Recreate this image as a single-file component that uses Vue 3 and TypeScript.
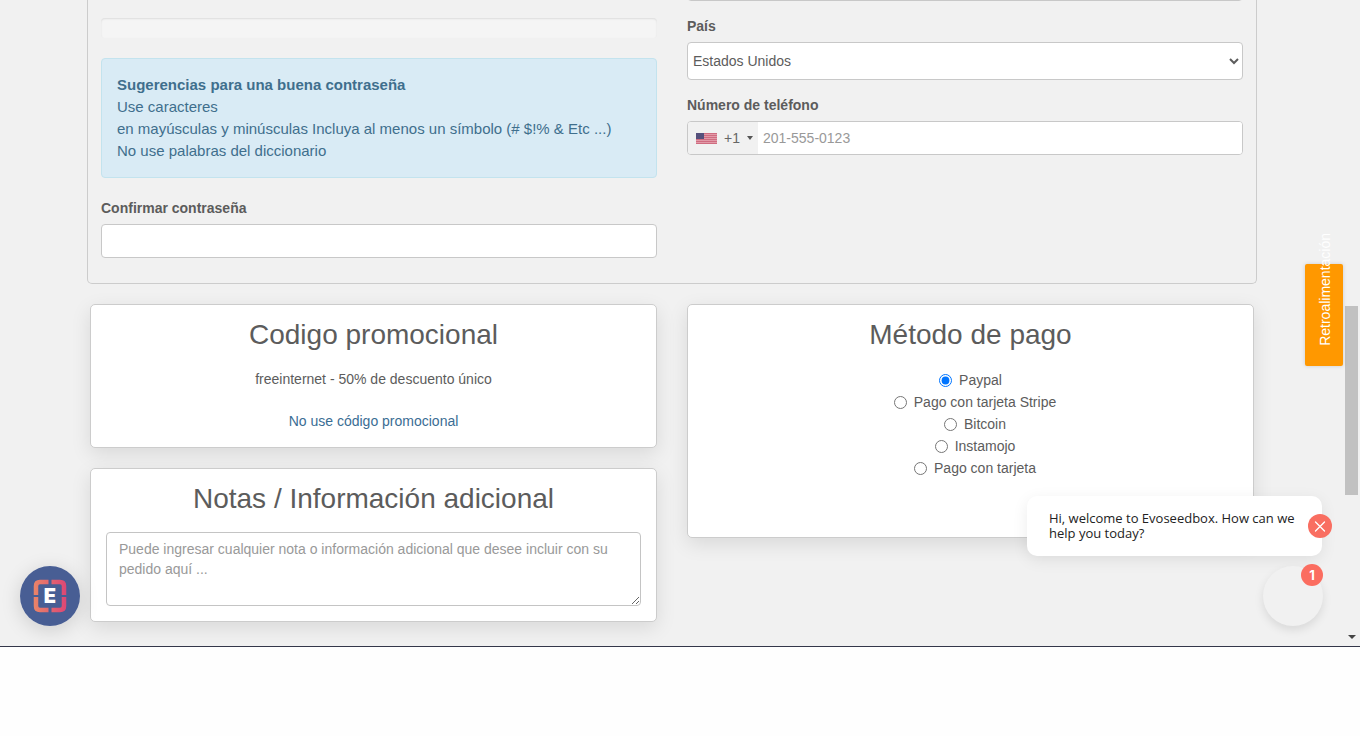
<script setup lang="ts">
import { ref } from 'vue'

interface PaymentMethod {
  id: string
  label: string
}

const methods: PaymentMethod[] = [
  { id: 'paypal', label: 'Paypal' },
  { id: 'stripe', label: 'Pago con tarjeta Stripe' },
  { id: 'bitcoin', label: 'Bitcoin' },
  { id: 'instamojo', label: 'Instamojo' },
  { id: 'card', label: 'Pago con tarjeta' },
]

const payment = ref('paypal')
const country = ref('US')
const city = ref('')
const phone = ref('')
const confirmation = ref('')
const notes = ref('')
</script>

<template>
  <div class="window">
    <main class="page">
      <div class="container">
        <section class="account">
          <div class="column">
            <div class="strength" role="progressbar" aria-label="Fuerza" aria-valuenow="0"></div>
            <div class="alert">
              <strong>Sugerencias para una buena contraseña</strong><br />
              Use caracteres<br />
              en mayúsculas y minúsculas Incluya al menos un símbolo (# $!% &amp; Etc ...)<br />
              No use palabras del diccionario
            </div>
            <div class="field">
              <label for="confirm">Confirmar contraseña</label>
              <input id="confirm" v-model="confirmation" type="password" class="control" />
            </div>
          </div>
          <div class="column">
            <div class="previous">
              <input v-model="city" type="text" class="control" aria-label="Ciudad" />
            </div>
            <div class="field country">
              <label for="country">País</label>
              <select id="country" v-model="country" class="control select">
                <option value="US">Estados Unidos</option>
              </select>
            </div>
            <div class="field">
              <label for="phone">Número de teléfono</label>
              <div class="control phone">
                <button type="button" class="dial">
                  <svg class="flag" viewBox="0 0 21 11" width="21" height="11" aria-hidden="true">
                    <rect width="21" height="11" fill="#e29aa8" />
                    <path d="M0 .5h21M0 2.500h21M0 4.500h21M0 6.500h21M0 8.500h21M0 10.500h21" stroke="#cf6c80" />
                    <rect width="8" height="6" fill="#55507c" />
                  </svg>
                  <span>+1</span>
                  <span class="caret"></span>
                </button>
                <input id="phone" v-model="phone" type="tel" placeholder="201-555-0123" />
              </div>
            </div>
          </div>
        </section>

        <div class="cards">
          <div class="stack">
            <section class="card">
              <h2>Codigo promocional</h2>
              <p>freeinternet - 50% de descuento único</p>
              <p class="remove"><a href="#">No use código promocional</a></p>
            </section>
            <section class="card">
              <h2>Notas / Información adicional</h2>
              <textarea
                v-model="notes"
                rows="3"
                aria-label="Notas"
                placeholder="Puede ingresar cualquier nota o información adicional que desee incluir con su pedido aquí ..."
              ></textarea>
            </section>
          </div>
          <section class="card payment">
            <h2>Método de pago</h2>
            <label v-for="m in methods" :key="m.id" class="method">
              <input v-model="payment" type="radio" name="payment" :value="m.id" />
              <span>{{ m.label }}</span>
            </label>
          </section>
        </div>
      </div>
    </main>

    <div class="scrollbar" aria-hidden="true">
      <div class="thumb"></div>
      <div class="down"></div>
    </div>

    <button type="button" class="feedback"><span>Retroalimentación</span></button>

    <button type="button" class="brand" aria-label="Evoseedbox">
      <svg viewBox="0 0 60 60" width="60" height="60">
        <defs>
          <linearGradient id="ring" gradientUnits="userSpaceOnUse" x1="14" y1="30" x2="46" y2="30">
            <stop offset="0" stop-color="#e98468" />
            <stop offset="1" stop-color="#dc4775" />
          </linearGradient>
        </defs>
        <circle cx="30" cy="30" r="30" fill="#485e94" />
        <path
          d="M16 29V20q0-4 4-4h8.500M31.500 16H40q4 0 4 4v9M44 31v9q0 4-4 4h-8.500M28.500 44H20q-4 0-4-4v-9"
          fill="none"
          stroke="url(#ring)"
          stroke-width="4.500"
        />
        <text class="initial" x="30" y="37" text-anchor="middle">E</text>
      </svg>
    </button>

    <div class="bubble">
      <p>Hi, welcome to Evoseedbox. How can we help you today?</p>
      <button type="button" class="close" aria-label="Cerrar">
        <svg viewBox="0 0 24 24" width="24" height="24">
          <path d="M7.500 8l9 9M16.500 8l-9 9" fill="none" stroke="#fff" stroke-width="1.300" stroke-linecap="round" />
        </svg>
      </button>
    </div>

    <button type="button" class="launcher" aria-label="Chat"><span class="badge">1</span></button>
  </div>
</template>

<style>
body {
  margin: 0;
  background: #fefefe;
}
</style>

<style scoped>
* {
  box-sizing: border-box;
}

.window {
  position: relative;
  display: flex;
  overflow: hidden;
  border-bottom: 1px solid #34374a;
  background: #f1f1f1;
  color: #5c5c5c;
  font: 14px/20px 'Liberation Sans', Arial, sans-serif;
}

.page {
  flex: 1;
  min-width: 0;
  padding-bottom: 24px;
}

.container {
  max-width: 1170px;
  margin: 0 auto;
}

.account {
  display: grid;
  grid-template-columns: 1fr 1fr;
  gap: 30px;
  padding: 0 13px 25px;
  border: 1px solid #ccc;
  border-top: 0;
  border-radius: 0 0 5px 5px;
}

.strength {
  height: 20px;
  margin: 18px 0 20px;
  border-radius: 4px;
  background: #f5f5f5;
  box-shadow: inset 0 1px 2px rgba(0, 0, 0, 0.1);
}

.alert {
  margin-bottom: 20px;
  padding: 15px;
  border: 1px solid #c3e3ee;
  border-radius: 4px;
  background: #d9ebf5;
  color: #3f6f8d;
  font-size: 15px;
  line-height: 22px;
}

.field label {
  display: block;
  margin-bottom: 6px;
  font-weight: bold;
}

.control {
  display: block;
  width: 100%;
  height: 34px;
  padding: 6px 12px;
  border: 1px solid #c8c8c8;
  border-radius: 4px;
  background: #fff;
  color: #5c5c5c;
  font: inherit;
}

.previous {
  display: flex;
  align-items: flex-end;
  height: 1px;
  margin-bottom: 15px;
  overflow: hidden;
}

.previous .control {
  flex: none;
}

.country {
  margin-bottom: 15px;
}

.select {
  height: 38px;
  padding: 0 2px 0 1px;
}

.phone {
  display: flex;
  padding: 0;
  overflow: hidden;
}

.dial {
  display: flex;
  align-items: center;
  gap: 7px;
  width: 70px;
  padding: 0 0 0 8px;
  border: 0;
  background: #f1f1f1;
  color: #666;
  font: inherit;
}

.flag {
  flex: none;
}

.caret {
  border: 3px solid transparent;
  border-top: 4px solid #555;
  border-bottom: 0;
}

.phone input {
  flex: 1;
  min-width: 0;
  padding: 0 5px;
  border: 0;
  outline: 0;
  color: #555;
  font: inherit;
}

::placeholder {
  color: #999;
}

.cards {
  display: grid;
  grid-template-columns: 1fr 1fr;
  align-items: start;
  gap: 30px;
  margin-top: 20px;
  padding: 0 3px;
}

.stack {
  display: grid;
  gap: 20px;
}

.card {
  padding: 14px 15px 15px;
  border: 1px solid #ccc;
  border-radius: 5px;
  background: #fff;
  box-shadow: 0 6px 20px rgba(0, 0, 0, 0.1);
  text-align: center;
}

.card h2 {
  margin: 0 0 17px;
  font-size: 28px;
  font-weight: normal;
  line-height: 32px;
}

.card p {
  margin: 0;
  line-height: 22px;
}

.card .remove {
  margin-top: 20px;
}

a {
  color: #3a6d94;
  text-decoration: none;
}

textarea {
  display: block;
  width: 100%;
  height: 74px;
  padding: 6px 12px;
  border: 1px solid #c4c4c4;
  border-radius: 4px;
  color: #555;
  font: inherit;
  resize: vertical;
}

.payment {
  min-height: 234px;
}

.card.payment h2 {
  margin-bottom: 18px;
}

.method {
  display: flex;
  align-items: center;
  justify-content: center;
  gap: 7px;
  line-height: 22px;
}

.method + .method {
  padding-left: 9px;
}

.method input {
  width: 13px;
  height: 13px;
  margin: 0;
}

.scrollbar {
  display: flex;
  flex-direction: column;
  justify-content: space-between;
  align-items: center;
  width: 16px;
  padding: 306px 2px 7px 1px;
  background: #f1f1f1;
}

.thumb {
  width: 13px;
  height: 189px;
  background: #c1c1c1;
}

.down {
  border: 4px solid transparent;
  border-top-color: #444;
  border-bottom: 0;
}

.feedback {
  position: absolute;
  top: 264px;
  right: 17px;
  display: flex;
  align-items: flex-end;
  justify-content: center;
  width: 38px;
  height: 102px;
  padding: 0 0 20px 2px;
  border: 0;
  border-radius: 2px;
  background: #ff9800;
  box-shadow: 0 0 4px rgba(0, 0, 0, 0.15);
  color: #fff;
  font: 14px/16px 'Liberation Sans', Arial, sans-serif;
}

.feedback span {
  writing-mode: vertical-rl;
  transform: rotate(180deg);
}

.brand {
  position: absolute;
  bottom: 20px;
  left: 20px;
  width: 60px;
  height: 60px;
  padding: 0;
  border: 0;
  border-radius: 50%;
  background: none;
  box-shadow: 0 4px 20px rgba(0, 0, 0, 0.15);
}

.brand svg,
.close svg {
  display: block;
}

.initial {
  fill: #fff;
  font: 900 20px Inter, 'Open Sans', sans-serif;
}

.bubble {
  position: absolute;
  right: 38px;
  bottom: 90px;
  width: 295px;
  padding: 15px 22px;
  border-radius: 10px;
  background: #fff;
  box-shadow: 0 4px 16px rgba(0, 0, 0, 0.08);
  color: #222;
  font: 13px/15px 'Open Sans', sans-serif;
}

.bubble p {
  margin: 0;
}

.close {
  position: absolute;
  top: 18px;
  right: -10px;
  width: 24px;
  height: 24px;
  padding: 0;
  border: 0;
  border-radius: 50%;
  background: #f96e61;
}

.launcher {
  position: absolute;
  right: 37px;
  bottom: 20px;
  width: 60px;
  height: 60px;
  padding: 0;
  border: 0;
  border-radius: 50%;
  background: #f1f1f1;
  box-shadow: 0 4px 10px rgba(0, 0, 0, 0.1);
}

.badge {
  position: absolute;
  top: -2px;
  right: 0;
  width: 22px;
  height: 22px;
  border-radius: 50%;
  background: #fb6d60;
  color: #fff;
  font: bold 13px/22px Inter, 'Open Sans', sans-serif;
  text-align: center;
}
</style>
